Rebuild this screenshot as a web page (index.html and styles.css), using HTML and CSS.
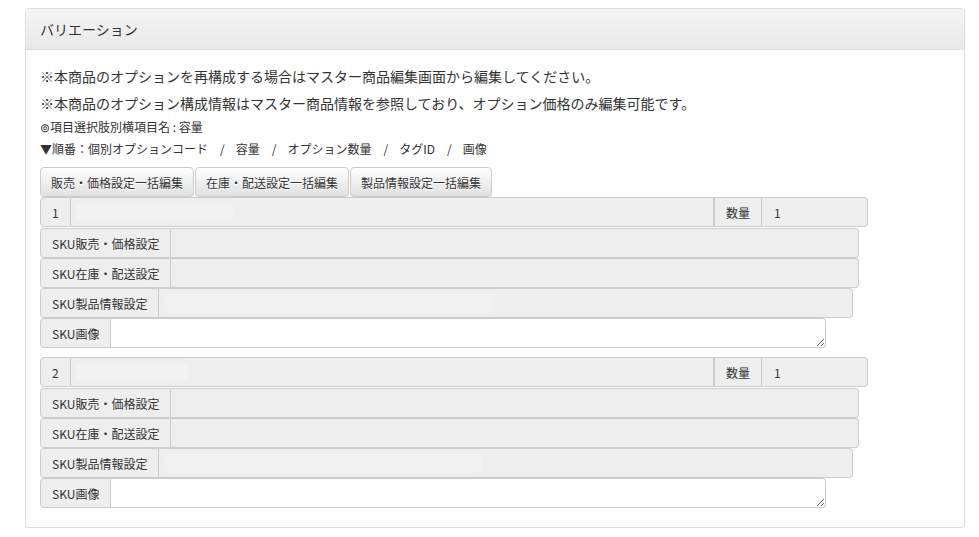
FILE: index.html
```html
<!DOCTYPE html>
<html lang="ja">
<head>
<meta charset="utf-8">
<title>バリエーション</title>
<link rel="stylesheet" href="styles.css">
</head>
<body>
<div class="panel">
  <div class="panel-heading">バリエーション</div>
  <div class="panel-body">
    <p class="note">※本商品のオプションを再構成する場合はマスター商品編集画面から編集してください。</p>
    <p class="note note2">※本商品のオプション構成情報はマスター商品情報を参照しており、オプション価格のみ編集可能です。</p>
    <p class="small">⊚項目選択肢別横項目名 : 容量</p>
    <p class="small order">▼順番：個別オプションコード<span class="sep">/</span>容量<span class="sep">/</span>オプション数量<span class="sep">/</span>タグID<span class="sep">/</span>画像</p>
    <div class="btn-row">
      <button class="btn">販売・価格設定一括編集</button>
      <button class="btn">在庫・配送設定一括編集</button>
      <button class="btn">製品情報設定一括編集</button>
    </div>

    <div class="variant">
      <div class="ig ig-head">
        <span class="addon">1</span>
        <span class="field grow"><span class="blur b-head1"></span></span>
        <span class="addon">数量</span>
        <span class="field qty">1</span>
      </div>
      <div class="ig ig-sales">
        <span class="addon">SKU販売・価格設定</span>
        <span class="field grow"></span>
      </div>
      <div class="ig ig-sales">
        <span class="addon">SKU在庫・配送設定</span>
        <span class="field grow"></span>
      </div>
      <div class="ig ig-prod">
        <span class="addon">SKU製品情報設定</span>
        <span class="field grow"><span class="blur b-prod1"></span></span>
      </div>
      <div class="ig ig-img">
        <span class="addon">SKU画像</span>
        <textarea class="area"></textarea>
      </div>
    </div>

    <div class="variant">
      <div class="ig ig-head">
        <span class="addon">2</span>
        <span class="field grow"><span class="blur b-head2"></span></span>
        <span class="addon">数量</span>
        <span class="field qty">1</span>
      </div>
      <div class="ig ig-sales">
        <span class="addon">SKU販売・価格設定</span>
        <span class="field grow"></span>
      </div>
      <div class="ig ig-sales">
        <span class="addon">SKU在庫・配送設定</span>
        <span class="field grow"></span>
      </div>
      <div class="ig ig-prod">
        <span class="addon">SKU製品情報設定</span>
        <span class="field grow"><span class="blur b-prod2"></span></span>
      </div>
      <div class="ig ig-img">
        <span class="addon">SKU画像</span>
        <textarea class="area"></textarea>
      </div>
    </div>
  </div>
</div>
</body>
</html>
```

FILE: styles.css
```css
* { box-sizing: border-box; }

body {
  margin: 8px 0 0 25px;
  background: #fff;
  color: #333;
  font-family: "Noto Sans CJK JP", "Liberation Sans", sans-serif;
  font-size: 14px;
}

.panel {
  width: 940px;
  border: 1px solid #ddd;
  border-radius: 4px;
  background: #fff;
  box-shadow: 0 1px 2px rgba(0,0,0,.08);
}

.panel-heading {
  height: 41px;
  padding: 0 14px;
  display: flex;
  align-items: center;
  font-size: 14px;
  color: #333;
  background: linear-gradient(#f5f5f5, #e8e8e8);
  border-bottom: 1px solid #ddd;
  border-radius: 3px 3px 0 0;
}

.panel-body {
  padding: 16px 14px 19px 14px;
}

.note {
  margin: 0 0 7px;
  font-size: 14px;
  line-height: 20px;
}
.note2 { margin-bottom: 5px; }

.small {
  margin: 0 0 4px;
  font-size: 12px;
  line-height: 18px;
}
.order { margin-bottom: 9px; }
.sep { margin: 0 11px 0 12px; }

.btn-row {
  display: flex;
  gap: 1px;
}

.btn {
  height: 30px;
  padding: 0 10px;
  font-family: inherit;
  font-size: 12px;
  color: #333;
  background: linear-gradient(#fff, #e0e0e0);
  border: 1px solid #ccc;
  border-radius: 4px;
  text-shadow: 0 1px 0 #fff;
  box-shadow: inset 0 1px 0 rgba(255,255,255,.15), 0 1px 1px rgba(0,0,0,.075);
  cursor: pointer;
}

.variant { margin-bottom: 9px; }
.variant:last-child { margin-bottom: 0; }

.ig {
  display: flex;
  height: 30px;
  font-size: 12px;
}
.ig-head { width: 828px; margin-bottom: 1px; }
.ig-sales { width: 819px; }
.ig-prod { width: 813px; }
.ig-img { width: 786px; }

.addon {
  display: flex;
  align-items: center;
  padding: 0 11px;
  background: #eee;
  border: 1px solid #ccc;
  border-radius: 4px 0 0 4px;
  white-space: nowrap;
  color: #333;
}
.field + .addon { border-radius: 0; }

.field {
  display: flex;
  align-items: center;
  background: #eee;
  border: 1px solid #ccc;
  border-left: 0;
  border-radius: 0 4px 4px 0;
  padding: 0 6px;
}
.field + .addon + .field { border-left: 0; }
.grow { flex: 1; }
.qty { width: 106px; padding-left: 12px; color: #333; }
.ig-head .field.grow { border-radius: 0; }

.blur {
  display: block;
  height: 18px;
  background: #f2f2f2;
  border-radius: 3px;
  filter: blur(2px);
}
.b-head1 { width: 156px; }
.b-head2 { width: 112px; }
.b-prod1 { width: 330px; }
.b-prod2 { width: 316px; }

.area {
  flex: 1;
  height: 30px;
  min-height: 30px;
  margin: 0;
  background: #fff;
  border: 1px solid #ccc;
  border-left: 0;
  border-radius: 0 4px 4px 0;
  font-family: inherit;
  font-size: 12px;
  resize: vertical;
}
```
